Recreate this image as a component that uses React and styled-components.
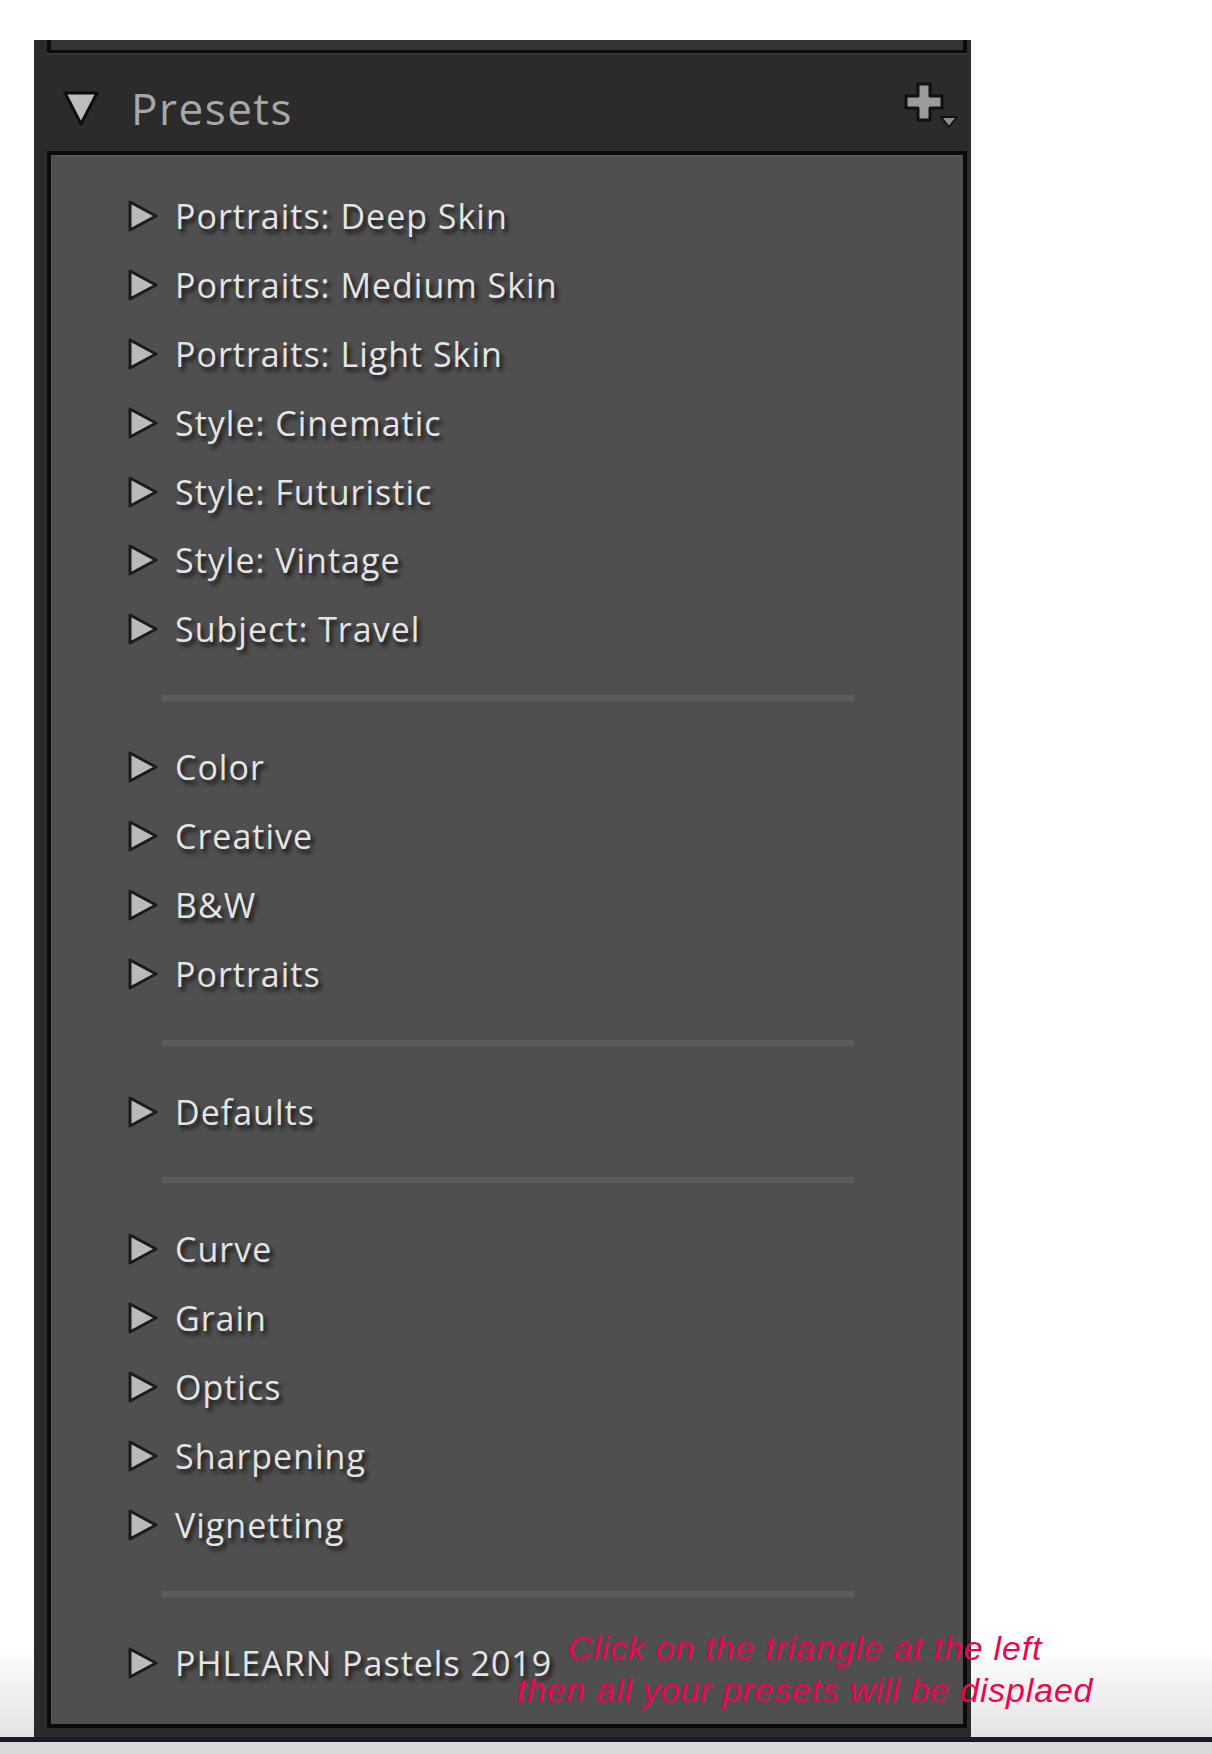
import React from 'react';
import styled, { createGlobalStyle } from 'styled-components';

const GlobalStyle = createGlobalStyle`
  html, body {
    margin: 0;
    padding: 0;
    background: #ffffff;
  }
  body {
    font-family: "Open Sans", "Noto Sans", sans-serif;
  }
`;

const Stage = styled.div`
  position: relative;
  height: 1737px;
  box-sizing: border-box;
  padding: 40px 0 0 34px;
  background: linear-gradient(to bottom, #ffffff 0, #ffffff 1645px, #e3e3e3 1737px);
`;

const Panel = styled.div`
  width: 937px;
  height: 1697px;
  box-sizing: border-box;
  padding: 0 4px 9px 13px;
  background: #2b2b2b;
  display: flex;
  flex-direction: column;
`;

const TopStrip = styled.div`
  height: 13px;
  box-sizing: border-box;
  background: #343434;
  border: 4px solid #0c0c0c;
  border-top: none;
  border-bottom-width: 3px;
`;

const Header = styled.div`
  height: 98px;
  box-sizing: border-box;
  padding: 10px 8px 0 15px;
  display: flex;
  align-items: center;
  border-top: 2px solid #363636;
`;

const Title = styled.span`
  margin-left: 31px;
  font-size: 44px;
  letter-spacing: 1.5px;
  color: #a8a8a8;
  flex: 1;
`;

const AddButton = styled.div`
  display: flex;
  align-items: center;
  margin-top: -4px;
`;

const Presets = styled.div`
  flex: 1;
  box-sizing: border-box;
  border: 4px solid #0b0b0b;
  background: #4f4f4f;
  box-shadow: inset 1px 1px 0 #595959;
  padding: 26.5px 0;
  display: flex;
  flex-direction: column;
`;

const Row = styled.div`
  height: 68.9px;
  flex: none;
  display: flex;
  align-items: center;
  padding-left: 76px;
`;

const Label = styled.span`
  margin-left: 16px;
  font-size: 34px;
  letter-spacing: 1px;
  color: #e4e4e4;
  white-space: nowrap;
  text-shadow: 3px 4px 4px rgba(0, 0, 0, 0.75);
`;

const SepSlot = styled.div`
  height: 68.9px;
  flex: none;
  display: flex;
  align-items: center;
  padding-left: 111px;
`;

const SepLine = styled.div`
  width: 692px;
  height: 6px;
  background: #5b5b5b;
`;

const Note = styled.div`
  position: absolute;
  left: 455px;
  top: 1627px;
  width: 700px;
  text-align: center;
  font-family: "Liberation Sans", Arial, sans-serif;
  font-style: italic;
  font-size: 34px;
  line-height: 42px;
  letter-spacing: 0.8px;
  color: #e8064f;
`;

const BottomBar = styled.div`
  height: 17px;
  box-sizing: border-box;
  border-top: 5px solid #1c1829;
  background: #dadada;
`;

const items = [
  'Portraits: Deep Skin',
  'Portraits: Medium Skin',
  'Portraits: Light Skin',
  'Style: Cinematic',
  'Style: Futuristic',
  'Style: Vintage',
  'Subject: Travel',
  '-',
  'Color',
  'Creative',
  'B&W',
  'Portraits',
  '-',
  'Defaults',
  '-',
  'Curve',
  'Grain',
  'Optics',
  'Sharpening',
  'Vignetting',
  '-',
  'PHLEARN Pastels 2019',
];

function RightTriangle() {
  return (
    <svg width="32" height="32" viewBox="0 0 32 32">
      <polygon
        points="3,2 29,16 3,30"
        fill="#bababa"
        stroke="#1b1b1b"
        strokeWidth="3"
        strokeLinejoin="round"
      />
    </svg>
  );
}

function DownTriangle() {
  return (
    <svg width="38" height="38" viewBox="0 0 38 38">
      <polygon
        points="3,4 35,4 19,35"
        fill="#bdbdbd"
        stroke="#0e0e0e"
        strokeWidth="3"
        strokeLinejoin="round"
      />
    </svg>
  );
}

function PlusMenu() {
  return (
    <svg width="56" height="48" viewBox="0 0 56 48">
      <polygon
        points="15,2 27,2 27,14 39,14 39,26 27,26 27,38 15,38 15,26 3,26 3,14 15,14"
        fill="#9b9b9b"
        stroke="#111"
        strokeWidth="3"
        strokeLinejoin="round"
      />
      <polygon
        points="38,35 54,35 46,45"
        fill="#8e8e8e"
        stroke="#111"
        strokeWidth="2"
        strokeLinejoin="round"
      />
    </svg>
  );
}

export default function App() {
  return (
    <>
      <GlobalStyle />
      <Stage>
        <Panel>
          <TopStrip />
          <Header>
            <DownTriangle />
            <Title>Presets</Title>
            <AddButton>
              <PlusMenu />
            </AddButton>
          </Header>
          <Presets>
            {items.map((name, i) =>
              name === '-' ? (
                <SepSlot key={i}>
                  <SepLine />
                </SepSlot>
              ) : (
                <Row key={i}>
                  <RightTriangle />
                  <Label>{name}</Label>
                </Row>
              )
            )}
          </Presets>
        </Panel>
        <Note>
          Click on the triangle at the left
          <br />
          then all your presets will be displaed
        </Note>
      </Stage>
      <BottomBar />
    </>
  );
}
